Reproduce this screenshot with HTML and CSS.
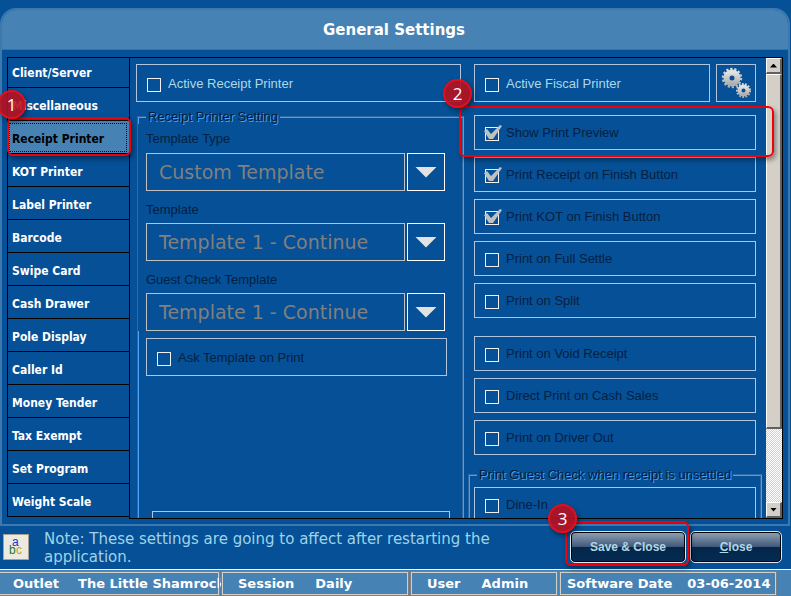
FILE: index.html
```html
<!DOCTYPE html>
<html lang="en">
<head>
<meta charset="utf-8">
<title>General Settings</title>
<link rel="stylesheet" href="styles.css">
</head>
<body>
<div class="app">
<main class="panel">
<h1 class="title">General Settings</h1>
<div class="workspace">
<nav class="tabs">
<button class="tab">Client/Server</button>
<button class="tab">Miscellaneous</button>
<button class="tab active">Receipt Printer<span class="callout"></span><span class="badge">1</span></button>
<button class="tab">KOT Printer</button>
<button class="tab">Label Printer</button>
<button class="tab">Barcode</button>
<button class="tab">Swipe Card</button>
<button class="tab">Cash Drawer</button>
<button class="tab">Pole Display</button>
<button class="tab">Caller Id</button>
<button class="tab">Money Tender</button>
<button class="tab">Tax Exempt</button>
<button class="tab">Set Program</button>
<button class="tab">Weight Scale</button>
</nav>
<section class="pane">
<div class="scrolled">
<div class="left">
<label class="option tall lit"><input type="checkbox"><span>Active Receipt Printer</span></label>
<fieldset class="group printer">
<legend>Receipt Printer Setting</legend>
<div class="fields">
<label class="caption" for="type">Template Type</label>
<div class="combo"><select id="type" disabled><option>Custom Template</option></select><button class="drop" aria-label="Open template types"></button></div>
<label class="caption" for="template">Template</label>
<div class="combo"><select id="template" disabled><option>Template 1 - Continue</option></select><button class="drop" aria-label="Open templates"></button></div>
<label class="caption" for="guest">Guest Check Template</label>
<div class="combo"><select id="guest" disabled><option>Template 1 - Continue</option></select><button class="drop" aria-label="Open guest check templates"></button></div>
</div>
<label class="option tall ask"><input type="checkbox"><span>Ask Template on Print</span></label>
<div class="next-box"></div>
</fieldset>
</div>
<div class="right">
<div class="fiscal">
<label class="option tall lit"><input type="checkbox"><span>Active Fiscal Printer</span></label>
<button class="gear" aria-label="Fiscal printer settings">
<svg viewBox="0 0 38 36"><defs><linearGradient id="steel" x1="0" y1="0" x2="0" y2="1"><stop offset="0" stop-color="#e2e2e2"/><stop offset="1" stop-color="#b0b0b0"/></linearGradient></defs>
<g fill="none" stroke="url(#steel)"><circle cx="15" cy="13" r="5.5" stroke-width="6"/><circle cx="15" cy="13" r="9" stroke-width="2.4" stroke-dasharray="2.2 1.84"/><circle cx="26.5" cy="25.5" r="4" stroke-width="4"/><circle cx="26.5" cy="25.5" r="6.5" stroke-width="2" stroke-dasharray="1.7 1.44"/></g></svg>
</button>
</div>
<div class="options">
<label class="option marked"><input type="checkbox" checked><span>Show Print Preview</span><span class="callout"></span><span class="badge">2</span></label>
<label class="option"><input type="checkbox" checked><span>Print Receipt on Finish Button</span></label>
<label class="option"><input type="checkbox" checked><span>Print KOT on Finish Button</span></label>
<label class="option"><input type="checkbox"><span>Print on Full Settle</span></label>
<label class="option"><input type="checkbox"><span>Print on Split</span></label>
<label class="option spaced"><input type="checkbox"><span>Print on Void Receipt</span></label>
<label class="option"><input type="checkbox"><span>Direct Print on Cash Sales</span></label>
<label class="option"><input type="checkbox"><span>Print on Driver Out</span></label>
</div>
<fieldset class="group guest">
<legend>Print Guest Check when receipt is unsettled</legend>
<label class="option"><input type="checkbox"><span>Dine-In</span></label>
</fieldset>
</div>
</div>
<div class="scrollbar"><button class="arrow up" aria-label="Scroll up"></button><div class="thumb"></div><div class="track"></div><button class="arrow down" aria-label="Scroll down"></button></div>
</section>
</div>
</main>
<div class="actions">
<button class="language" aria-label="Language"><span class="a">a</span><span class="b">b</span><span class="c">c</span></button>
<p class="note">Note: These settings are going to affect after restarting the application.</p>
<div class="buttons">
<button class="command save">Save &amp; Close<span class="callout"></span><span class="badge">3</span></button>
<button class="command close"><u>C</u>lose</button>
</div>
</div>
<footer class="status">
<div class="cell outlet"><b>Outlet</b><b>The Little Shamrock</b></div>
<div class="cell"><b>Session</b><b>Daily</b></div>
<div class="cell"><b>User</b><b>Admin</b></div>
<div class="cell date"><b>Software Date</b><b>03-06-2014</b></div>
</footer>
</div>
</body>
</html>
```
FILE: styles.css
```css
* { box-sizing: border-box; }
body { margin: 0; background: #055096; font-family: "Liberation Sans", Arial, sans-serif; font-size: 13px; }
button { font: inherit; margin: 0; padding: 0; border: 0; background: none; color: inherit; }

.app { height: 100vh; min-height: 596px; display: flex; flex-direction: column; padding-top: 8px; }
.panel { flex: 1; min-height: 0; display: flex; flex-direction: column; border: 2px solid #3d79af; border-radius: 16px 16px 0 0; margin-right: 1px; }
.title { margin: 0; height: 40px; flex: none; display: flex; align-items: center; justify-content: center; padding-right: 2px; background: #4682b4; border-radius: 14px 14px 0 0; color: #fff; font: bold 15px "DejaVu Sans", Verdana, sans-serif; border-bottom: 1px solid #3672a8; }
.workspace { flex: 1; min-height: 0; display: flex; padding: 7px 5px 5px; }

/* Section tabs */
.tabs { width: 122px; flex: none; display: flex; flex-direction: column; }
.tab { position: relative; flex: none; height: 33px; padding: 3px 4px 0; text-align: left; color: #fff; font: bold 12px "DejaVu Sans Condensed", Tahoma, sans-serif; border: solid #000; border-width: 0 0 1px 1px; }
.tab:first-child { height: 31px; padding-top: 1px; border-top-width: 1px; }
.tab.active { background: #4682b4; color: #000; outline: 1px dotted #000; outline-offset: -3px; z-index: 2; }

/* Settings pane */
.pane { position: relative; flex: 1; min-width: 0; display: flex; border: 1px solid #000; overflow: hidden; }
.scrolled { flex: 1; min-width: 0; display: flex; gap: 13px; padding: 6px 10px 0 6px; }
.left { flex: 1; min-width: 0; }
.right { width: 282px; flex: none; }

.option { position: relative; display: flex; align-items: center; gap: 7px; height: 35px; padding-left: 10px; border: 1px solid #b0c4de; color: #06203f; }
.option.tall { height: 38px; }
.option.lit { color: #add8e6; }
.option input { appearance: none; position: relative; width: 14px; height: 14px; margin: 3px 0 0; border: 1px solid #f0f0f0; flex: none; }
.option input:checked::after { content: ""; position: absolute; left: -2px; top: -3px; width: 18px; height: 15px; background: #c0c0c0; clip-path: polygon(0 6px, 3px 4px, 7px 9px, 16px 0, 18px 1px, 9px 14px, 5px 14px); }

.group { margin: 0; padding: 0; border: 2px groove #4aa0f5; min-width: 0; }
.group legend { padding: 0 2px; line-height: 15px; color: #041c3c; text-shadow: 1px 1px #4aa0f5; }
.printer { margin: 7px -3px 0 1px; height: 440px; padding-left: 7px; }
.fields { margin-left: -8px; padding: 2px 0 0 8px; background: #055096; width: 316px; }
.caption { display: block; height: 31px; line-height: 25px; color: #06203f; }
.caption:first-child { height: 27px; }
.combo { display: flex; gap: 2px; width: 299px; height: 38px; }
.combo + .caption { height: 32px; padding-top: 6px; }
.combo select { appearance: none; flex: 1; min-width: 0; border: 1px solid #c0c0c0; background: none; border-radius: 0; padding: 0 12px; color: #808080; opacity: 1; font: 19px "DejaVu Sans", Verdana, sans-serif; }
.drop { width: 38px; border: 1px solid #fff; display: flex; align-items: center; justify-content: center; }
.drop::before { content: ""; width: 22px; height: 11px; background: #e2e2e2; clip-path: polygon(0 0, 100% 0, 50% 100%); }
.ask { width: 301px; margin-top: 7px; }
.next-box { margin: 135px 0 0 6px; width: 298px; height: 38px; border: 1px solid #b0c4de; }

.fiscal { display: flex; gap: 6px; margin-bottom: 13px; }
.fiscal .option { flex: 1; }
.gear { width: 40px; height: 38px; border: 1px solid #b0c4de; }
.gear svg { display: block; width: 38px; height: 36px; }
.options { display: flex; flex-direction: column; gap: 7px; }
.spaced { margin-top: 11px; }
.guest { margin: 12px -6px 0; height: 200px; padding: 5px 4px 0; }
.guest legend { margin-left: 3px; }

/* Scrollbar */
.scrollbar { width: 16px; flex: none; display: flex; flex-direction: column; }
.arrow, .thumb { background: #d4d0c8; border: solid; border-width: 1px 2px 2px 1px; border-color: #fff #606060 #606060 #fff; }
.arrow { height: 16px; flex: none; display: flex; align-items: center; justify-content: center; }
.arrow::before { content: ""; width: 7px; height: 4px; background: #000; clip-path: polygon(0 0, 100% 0, 50% 100%); }
.arrow.up::before { clip-path: polygon(50% 0, 100% 100%, 0 100%); }
.thumb { flex: 354; }
.track { flex: 74; background: repeating-conic-gradient(#fff 0 25%, #d4d0c8 0 50%) 0 0 / 2px 2px; }

/* Numbered callouts */
.callout { position: absolute; z-index: 3; border: 2px solid #f00008; border-radius: 6px; box-shadow: 2px 3px 5px #0006; }
.badge { position: absolute; z-index: 4; width: 29px; height: 29px; border: 2px solid #e0101c; border-radius: 50%; background: #b8101ee6; color: #fff; font: 17px/25px "Open Sans", sans-serif; text-align: center; box-shadow: 2px 3px 5px #0006; }
.tab .callout { inset: -4px -2px -3px -1px; }
.tab .badge { left: -11px; top: -31px; }
.marked { z-index: 3; }
.marked .callout { inset: -10px -19px -8px -16px; }
.marked .badge { left: -32px; top: -37px; }
.save .callout { inset: -11px -4px -4px -6px; }
.save .badge { left: -23px; top: -28px; }

/* Footer */
.actions { flex: none; height: 43px; display: flex; align-items: flex-start; padding: 4px 9px 0 3px; }
.language { position: relative; width: 26px; height: 26px; margin-top: 4px; flex: none; background: #ece9e0; border: 1px solid #a8a090; font-size: 12px; line-height: 12px; }
.language span { position: absolute; }
.language .a { left: 8px; top: 1px; color: #2030d0; }
.language .b { left: 5px; top: 9px; color: #207830; }
.language .c { left: 12px; top: 9px; color: #c0a020; }
.note { flex: 1; margin: 0 0 0 15px; padding-right: 60px; color: #9fd3e8; font: 15px/18px "DejaVu Sans", Verdana, sans-serif; }
.buttons { display: flex; gap: 4px; margin-top: 1px; }
.command { position: relative; height: 32px; border: 1px solid #dfe8f0; border-radius: 5px; background: linear-gradient(#93a3b7, #40597a 49%, #04264a 50%, #052b52); box-shadow: inset 0 0 0 1px #000; color: #add8e6; font: bold 12px "Liberation Sans", Arial, sans-serif; }
.save { width: 116px; }
.close { width: 92px; }
.status { flex: none; height: 27px; display: grid; grid-template-columns: 219fr 186fr 146fr 216fr; gap: 3px; padding: 2px 15px 1px 0; border-top: 1px solid #fff; background: #4682b4; }
.cell { min-width: 0; display: flex; align-items: center; gap: 21px; padding-left: 15px; border: 1px solid #d4d0c8; outline: 1px solid #808080; background: #4682b4; white-space: nowrap; color: #fff; font: 13px "DejaVu Sans", Verdana, sans-serif; }
.outlet { border-left: 0; padding-left: 13px; gap: 19px; }
.date { padding-left: 6px; gap: 15px; }
```
